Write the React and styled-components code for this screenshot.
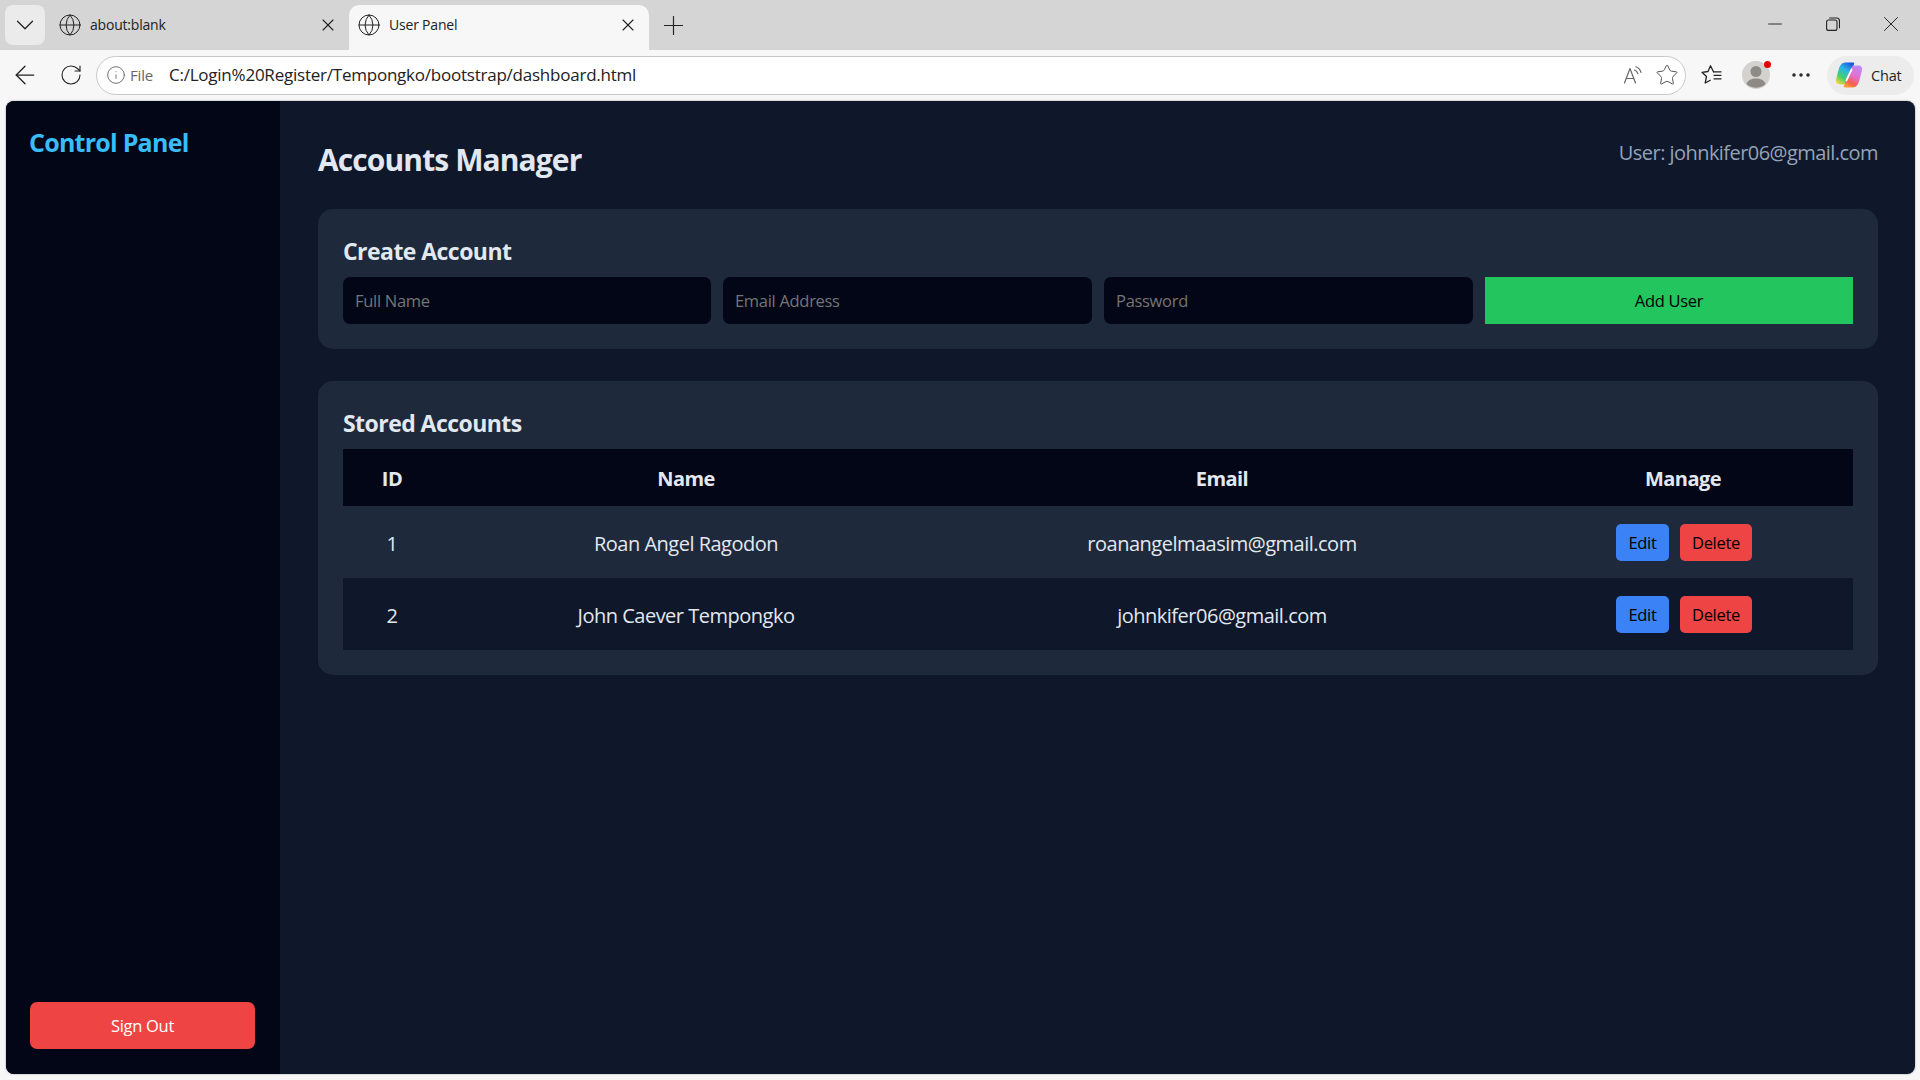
import React from "react";
import styled, { createGlobalStyle } from "styled-components";
import { ArrowLeft, RotateCw, Info, Star, Plus, X, Minus, ChevronDown, Globe, MoreHorizontal } from "lucide-react";

const GlobalStyle = createGlobalStyle`
  html, body {
    margin: 0;
    height: 100%;
    background: #f7f7f7;
  }
  #root {
    height: 100%;
  }
  * {
    box-sizing: border-box;
  }
`;

const Page = styled.div`
  height: 1080px;
  display: flex;
  flex-direction: column;
  font-family: "Open Sans", "Noto Sans", "Liberation Sans", sans-serif;
`;

const TabStrip = styled.div`
  height: 50px;
  background: #d5d5d5;
  display: flex;
  align-items: flex-end;
  padding-left: 5px;
  color: #222;
`;

const TabMenu = styled.div`
  width: 40px;
  height: 40px;
  margin-bottom: 5px;
  border-radius: 8px;
  background: #ebebeb;
  display: flex;
  align-items: center;
  justify-content: center;
`;

const Tab = styled.div`
  width: ${(props) => props.wth};
  height: 45px;
  padding: 0 11px 6px ${(props) => props.pl};
  border-radius: 10px 10px 0 0;
  background: ${(props) => (props.active ? "#f7f7f7" : "transparent")};
  display: flex;
  align-items: center;
  gap: 8px;
`;

const TabTitle = styled.span`
  flex: 1;
  font-size: 14px;
  letter-spacing: -0.2px;
`;

const NewTab = styled.div`
  width: 40px;
  height: 40px;
  margin: 0 0 5px 4px;
  display: flex;
  align-items: center;
  justify-content: center;
`;

const WindowButtons = styled.div`
  margin-left: auto;
  align-self: flex-start;
  height: 48px;
  display: flex;
  align-items: center;
`;

const WindowButton = styled.div`
  width: 58px;
  display: flex;
  align-items: center;
  justify-content: center;
`;

const Toolbar = styled.div`
  height: 50px;
  background: #f7f7f7;
  display: flex;
  align-items: center;
  padding: 0 6px 0 2px;
  color: #222;
`;

const ToolButton = styled.div`
  width: ${(props) => props.wth || "44px"};
  height: 40px;
  display: flex;
  align-items: center;
  justify-content: center;
  flex: none;
`;

const AddressBar = styled.div`
  flex: 1;
  height: 39px;
  margin: 0 4px 0 2px;
  padding: 0 6px 0 9px;
  border: 1px solid #c9c9c9;
  border-radius: 20px;
  background: #fff;
  display: flex;
  align-items: center;
  color: #666;
`;

const FileLabel = styled.span`
  margin: 0 16px 0 4px;
  font-size: 15px;
  letter-spacing: -0.2px;
`;

const Url = styled.span`
  flex: 1;
  margin-top: -2px;
  font-size: 17px;
  letter-spacing: -0.23px;
  color: #222;
`;

const Avatar = styled.div`
  position: relative;
  width: 28px;
  height: 28px;
  border-radius: 50%;
  background: #d3d2cf;
`;

const AvatarDot = styled.span`
  position: absolute;
  right: -1px;
  top: 0;
  width: 7px;
  height: 7px;
  border-radius: 50%;
  background: #e60000;
`;

const ChatPill = styled.div`
  width: 87px;
  height: 39px;
  margin-left: 3px;
  padding-left: 8px;
  border-radius: 20px;
  background: #ececec;
  display: flex;
  align-items: center;
  gap: 8px;
  font-size: 14.5px;
  letter-spacing: -0.2px;
`;

const AppWindow = styled.div`
  flex: 1;
  margin: 1px 5px 6px 6px;
  border-radius: 8px;
  overflow: hidden;
  display: flex;
  background: #0f172a;
  box-shadow: 0 0 2px rgba(0, 0, 0, 0.4);
`;

const Sidebar = styled.aside`
  width: 274px;
  padding: 24px 25px 25px 24px;
  background: #020617;
  display: flex;
  flex-direction: column;
  justify-content: space-between;
`;

const Brand = styled.h2`
  margin: 0 0 0 -1px;
  font-size: 25px;
  line-height: 34px;
  font-weight: 700;
  letter-spacing: -0.75px;
  color: #38bdf8;
`;

const SignOut = styled.button`
  width: 225px;
  height: 47px;
  border: none;
  border-radius: 7px;
  background: #ef4444;
  color: #fff;
  font-family: inherit;
  font-size: 16.5px;
  letter-spacing: -0.3px;
`;

const Main = styled.main`
  flex: 1;
  padding: 36px 37px 0 38px;
`;

const Header = styled.header`
  display: flex;
  justify-content: space-between;
  align-items: flex-start;
  margin-bottom: 27px;
`;

const Title = styled.h1`
  margin: 0;
  font-size: 30px;
  line-height: 45px;
  font-weight: 700;
  letter-spacing: -0.9px;
  color: #e2e8f0;
`;

const UserEmail = styled.span`
  margin-top: 2px;
  font-size: 20px;
  line-height: 27px;
  letter-spacing: -0.55px;
  color: #94a3b8;
`;

const Card = styled.section`
  padding: 25px;
  border-radius: 15px;
  background: #1e293b;
  margin-bottom: 32px;
`;

const CardTitle = styled.h3`
  margin: 0 0 9px;
  font-size: 23px;
  line-height: 34px;
  font-weight: 700;
  letter-spacing: -0.55px;
  color: #e2e8f0;
`;

const FormRow = styled.div`
  display: grid;
  grid-template-columns: 368px 369px 369px 1fr;
  gap: 12px;
`;

const Input = styled.input`
  min-width: 0;
  height: 47px;
  padding: 0 12px;
  border: none;
  border-radius: 7px;
  background: #020617;
  color: #fff;
  font-family: inherit;
  font-size: 16.5px;
  letter-spacing: -0.3px;
  &::placeholder {
    color: #757575;
    opacity: 1;
  }
`;

const AddButton = styled.button`
  height: 47px;
  border: none;
  background: #22c55e;
  color: #000;
  font-family: inherit;
  font-size: 16.5px;
  letter-spacing: -0.3px;
`;

const Table = styled.table`
  width: 100%;
  table-layout: fixed;
  border-collapse: collapse;
`;

const HeadCell = styled.th`
  width: ${(props) => props.wth};
  height: 57px;
  padding: 2px 0 0;
  background: #020617;
  color: #e2e8f0;
  font-size: 20px;
  font-weight: 700;
  letter-spacing: -0.55px;
  text-align: center;
`;

const Row = styled.tr`
  background: ${(props) => props.bg};
`;

const Cell = styled.td`
  height: 72px;
  padding: 2px 0 0;
  color: #e2e8f0;
  font-size: 20px;
  letter-spacing: -0.5px;
  text-align: center;
`;

const Actions = styled.div`
  display: flex;
  justify-content: center;
  gap: 11px;
  padding-left: 2px;
  margin-top: -1px;
`;

const SmallButton = styled.button`
  height: 37px;
  width: ${(props) => props.wth};
  padding: 0;
  border: none;
  border-radius: 5px;
  background: ${(props) => props.bg};
  color: #000;
  font-family: inherit;
  font-size: 16.5px;
  letter-spacing: -0.3px;
`;

function CopilotLogo() {
  return (
    <svg width="28" height="28" viewBox="0 0 28 28">
      <defs>
        <linearGradient id="copA" x1="0.75" y1="0" x2="0.2" y2="1">
          <stop offset="0" stopColor="#1a55e0" />
          <stop offset="0.35" stopColor="#29b6e6" />
          <stop offset="0.7" stopColor="#47cf6b" />
          <stop offset="1" stopColor="#f6d83a" />
        </linearGradient>
        <linearGradient id="copB" x1="0.8" y1="0" x2="0.3" y2="1">
          <stop offset="0" stopColor="#b98cf2" />
          <stop offset="0.45" stopColor="#e46fd6" />
          <stop offset="0.8" stopColor="#f2604f" />
          <stop offset="1" stopColor="#f79a2f" />
        </linearGradient>
      </defs>
      <path d="M10.500 1.500h7.500c1 0 1.500.7 1 1.700L13 19c-1.200 3.200-2.800 4.500-5.500 4.500H4.800C2 23.500.4 21.500 1 18.800L3.500 9C4.800 4.200 7 1.500 10.500 1.500z" fill="url(#copA)" />
      <path d="M17.500 26.500H10c-1 0-1.500-.7-1-1.700L15 9c1.200-3.200 2.800-4.500 5.500-4.500h2.700c2.800 0 4.400 2 3.800 4.700L24.500 19c-1.300 4.800-3.500 7.500-7 7.500z" fill="url(#copB)" />
      <path d="M16.600 8.500 11.400 19.500" stroke="#fff" strokeWidth="1.8" strokeLinecap="round" />
    </svg>
  );
}

function ReadAloudIcon() {
  return (
    <svg width="20" height="20" viewBox="0 0 20 20" fill="none" stroke="#666" strokeWidth="1.2" strokeLinecap="round" strokeLinejoin="round">
      <path d="M1.500 18 7 3.500 12.500 18M3.300 13.500h7.400" />
      <path d="M11.500 5c1.700.6 2.900 1.900 3.300 3.700" />
      <path d="M12.800 1.800c2.600.9 4.500 3 5.200 5.600" />
    </svg>
  );
}

function FavoritesIcon() {
  return (
    <svg width="22" height="22" viewBox="0 0 22 22" fill="none" stroke="#222" strokeWidth="1.3" strokeLinejoin="round" strokeLinecap="round">
      <path d="M12.500 7.800 9.500 1.800 7 7.500 1 8.300l4.500 4.200L4.200 19l5-2.800" />
      <path d="M12.500 7.800h7.500M13 11.300h7M13 14.800h7" />
    </svg>
  );
}

function RestoreIcon() {
  return (
    <svg width="14" height="14" viewBox="0 0 14 14" fill="none" stroke="#222" strokeWidth="1.1">
      <rect x="0.600" y="3" width="10.400" height="10.400" rx="2" />
      <path d="M3.200 1h7.300a3 3 0 0 1 3 3v7.300" />
    </svg>
  );
}

function ProfileGlyph() {
  return (
    <svg width="28" height="28" viewBox="0 0 28 28">
      <circle cx="14" cy="10.500" r="5.500" fill="#8e8b87" />
      <path d="M4.500 23c1.400-4 5-5.500 9.500-5.500s8.100 1.500 9.500 5.500a14 14 0 0 1-19 0z" fill="#8e8b87" />
    </svg>
  );
}

const accounts = [
  { id: 1, name: "Roan Angel Ragodon", email: "roanangelmaasim@gmail.com" },
  { id: 2, name: "John Caever Tempongko", email: "johnkifer06@gmail.com" },
];

export default function App() {
  return (
    <Page>
      <GlobalStyle />
      <TabStrip>
        <TabMenu>
          <ChevronDown size={30} strokeWidth={1} />
        </TabMenu>
        <Tab wth="304px" pl="13px">
          <Globe size={24} strokeWidth={1} />
          <TabTitle>about:blank</TabTitle>
          <X size={20} strokeWidth={1.3} />
        </Tab>
        <Tab wth="300px" pl="8px" active>
          <Globe size={24} strokeWidth={1} />
          <TabTitle>User Panel</TabTitle>
          <X size={20} strokeWidth={1.3} />
        </Tab>
        <NewTab>
          <Plus size={31} strokeWidth={0.9} />
        </NewTab>
        <WindowButtons>
          <WindowButton>
            <Minus size={22} strokeWidth={1} />
          </WindowButton>
          <WindowButton>
            <RestoreIcon />
          </WindowButton>
          <WindowButton>
            <X size={26} strokeWidth={0.9} />
          </WindowButton>
        </WindowButtons>
      </TabStrip>
      <Toolbar>
        <ToolButton wth="46px">
          <ArrowLeft size={30} strokeWidth={1} />
        </ToolButton>
        <ToolButton wth="46px">
          <RotateCw size={24} strokeWidth={1.1} />
        </ToolButton>
        <AddressBar>
          <Info size={20} strokeWidth={1.1} />
          <FileLabel>File</FileLabel>
          <Url>C:/Login%20Register/Tempongko/bootstrap/dashboard.html</Url>
          <ToolButton wth="44px">
            <ReadAloudIcon />
          </ToolButton>
          <Star size={24} strokeWidth={1} color="#555" />
        </AddressBar>
        <ToolButton>
          <FavoritesIcon />
        </ToolButton>
        <ToolButton>
          <Avatar>
            <ProfileGlyph />
            <AvatarDot />
          </Avatar>
        </ToolButton>
        <ToolButton wth="46px">
          <MoreHorizontal size={24} strokeWidth={1.5} />
        </ToolButton>
        <ChatPill>
          <CopilotLogo />
          Chat
        </ChatPill>
      </Toolbar>
      <AppWindow>
        <Sidebar>
          <Brand>Control Panel</Brand>
          <SignOut>Sign Out</SignOut>
        </Sidebar>
        <Main>
          <Header>
            <Title>Accounts Manager</Title>
            <UserEmail>User: johnkifer06@gmail.com</UserEmail>
          </Header>
          <Card>
            <CardTitle>Create Account</CardTitle>
            <FormRow>
              <Input placeholder="Full Name" />
              <Input placeholder="Email Address" />
              <Input placeholder="Password" />
              <AddButton>Add User</AddButton>
            </FormRow>
          </Card>
          <Card>
            <CardTitle>Stored Accounts</CardTitle>
            <Table>
              <thead>
                <tr>
                  <HeadCell wth="98px">ID</HeadCell>
                  <HeadCell wth="490px">Name</HeadCell>
                  <HeadCell wth="582px">Email</HeadCell>
                  <HeadCell>Manage</HeadCell>
                </tr>
              </thead>
              <tbody>
                {accounts.map((a, i) => (
                  <Row key={a.id} bg={i % 2 === 1 ? "#0f172a" : "#1e293b"}>
                    <Cell>{a.id}</Cell>
                    <Cell>{a.name}</Cell>
                    <Cell>{a.email}</Cell>
                    <Cell>
                      <Actions>
                        <SmallButton wth="53px" bg="#3b82f6">Edit</SmallButton>
                        <SmallButton wth="72px" bg="#ef4444">Delete</SmallButton>
                      </Actions>
                    </Cell>
                  </Row>
                ))}
              </tbody>
            </Table>
          </Card>
        </Main>
      </AppWindow>
    </Page>
  );
}
